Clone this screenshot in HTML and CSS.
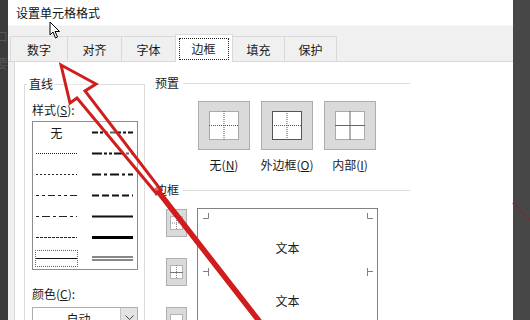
FILE: index.html
```html
<!DOCTYPE html>
<html lang="zh">
<head>
<meta charset="utf-8">
<title>设置单元格格式</title>
<link rel="stylesheet" href="styles.css">
</head>
<body>
<div class="strip-left"><span class="ghost g1">口</span><span class="ghost g2">要</span></div>
<div class="dialog">
  <div class="titlebar">设置单元格格式</div>
  <div class="tabbar">
    <div class="tab t1">数字</div>
    <div class="tab t2">对齐</div>
    <div class="tab t3">字体</div>
    <div class="tab t4 active"><span class="focus">边框</span></div>
    <div class="tab t5">填充</div>
    <div class="tab t6">保护</div>
  </div>
  <div class="body">
    <div class="panel">
      <fieldset class="linegroup">
        <legend>直线</legend>
        <div class="fs-inner">
          <div class="lbl">样式(<u>S</u>):</div>
          <div class="stylebox">
            <div class="cell"><span class="none">无</span></div>
            <div class="cell"><svg width="41" height="5"><line x1="0" y1="2.5" x2="41" y2="2.5" stroke="#111" stroke-width="2" stroke-dasharray="6 2 3 2 3 2"/></svg></div>
            <div class="cell"><svg width="41" height="5"><line x1="0" y1="2.5" x2="41" y2="2.5" stroke="#222" stroke-width="1" stroke-dasharray="1 1"/></svg></div>
            <div class="cell"><svg width="41" height="5"><line x1="0" y1="2.5" x2="41" y2="2.5" stroke="#111" stroke-width="2" stroke-dasharray="10 2 3 2 3 2"/></svg></div>
            <div class="cell"><svg width="41" height="5"><line x1="0" y1="2.5" x2="41" y2="2.5" stroke="#222" stroke-width="1" stroke-dasharray="2 2"/></svg></div>
            <div class="cell"><svg width="41" height="5"><line x1="0" y1="2.5" x2="41" y2="2.5" stroke="#111" stroke-width="2" stroke-dasharray="9 3 3 3"/></svg></div>
            <div class="cell"><svg width="41" height="5"><line x1="0" y1="2.5" x2="41" y2="2.5" stroke="#222" stroke-width="1" stroke-dasharray="3 3 3 3 7 3"/></svg></div>
            <div class="cell"><svg width="41" height="5"><line x1="0" y1="2.5" x2="41" y2="2.5" stroke="#111" stroke-width="2" stroke-dasharray="7 3"/></svg></div>
            <div class="cell"><svg width="41" height="5"><line x1="0" y1="2.5" x2="41" y2="2.5" stroke="#222" stroke-width="1" stroke-dasharray="3 3 8 3"/></svg></div>
            <div class="cell"><svg width="41" height="5"><line x1="0" y1="2.5" x2="41" y2="2.5" stroke="#111" stroke-width="2"/></svg></div>
            <div class="cell"><svg width="41" height="5"><line x1="0" y1="2.5" x2="41" y2="2.5" stroke="#222" stroke-width="1" stroke-dasharray="3 1"/></svg></div>
            <div class="cell"><svg width="41" height="5"><line x1="0" y1="2.5" x2="41" y2="2.5" stroke="#000" stroke-width="3"/></svg></div>
            <div class="cell sel"><svg width="41" height="5"><line x1="0" y1="2.5" x2="41" y2="2.5" stroke="#111" stroke-width="1"/></svg></div>
            <div class="cell"><svg width="41" height="5"><line x1="0" y1="1" x2="41" y2="1" stroke="#111" stroke-width="1"/><line x1="0" y1="4" x2="41" y2="4" stroke="#111" stroke-width="1"/></svg></div>
          </div>
          <div class="lbl lbl2">颜色(<u>C</u>):</div>
          <div class="combo"><span class="combo-text">自动</span><span class="combo-btn"><svg width="9" height="6"><path d="M0.5 0.5 L4.5 4.5 L8.5 0.5" fill="none" stroke="#444" stroke-width="1"/></svg></span></div>
        </div>
      </fieldset>
      <div class="right">
        <div class="sechead">预置</div>
        <div class="presets">
          <div class="preset">
            <div class="pbtn"><svg width="30" height="29"><rect x="0" y="0" width="30" height="29" fill="#fff"/><rect x="0.5" y="0.5" width="29" height="28" fill="none" stroke="#555" stroke-dasharray="1 1"/><line x1="15" y1="0" x2="15" y2="29" stroke="#555" stroke-dasharray="1 1"/><line x1="0" y1="14.5" x2="30" y2="14.5" stroke="#555" stroke-dasharray="1 1"/></svg></div>
            <div class="plabel">无(<u>N</u>)</div>
          </div>
          <div class="preset">
            <div class="pbtn"><svg width="30" height="29"><rect x="0" y="0" width="30" height="29" fill="#fff"/><line x1="15" y1="0" x2="15" y2="29" stroke="#555" stroke-dasharray="1 1"/><line x1="0" y1="14.5" x2="30" y2="14.5" stroke="#555" stroke-dasharray="1 1"/><rect x="0.5" y="0.5" width="29" height="28" fill="none" stroke="#555"/></svg></div>
            <div class="plabel">外边框(<u>O</u>)</div>
          </div>
          <div class="preset">
            <div class="pbtn"><svg width="30" height="29"><rect x="0" y="0" width="30" height="29" fill="#fff"/><rect x="0.5" y="0.5" width="29" height="28" fill="none" stroke="#555" stroke-dasharray="1 1"/><line x1="15" y1="0" x2="15" y2="29" stroke="#666"/><line x1="0" y1="14.5" x2="30" y2="14.5" stroke="#666"/></svg></div>
            <div class="plabel">内部(<u>I</u>)</div>
          </div>
        </div>
        <div class="sechead sec2">边框</div>
        <div class="borderarea">
          <div class="sidebtns">
            <div class="sbtn"><svg width="13" height="14"><rect x="0" y="0" width="13" height="14" fill="#fff"/><rect x="0.5" y="0.5" width="12" height="13" fill="none" stroke="#666" stroke-dasharray="1 1"/><line x1="0" y1="7" x2="13" y2="7" stroke="#888" stroke-dasharray="1 1"/><line x1="6.5" y1="0" x2="6.5" y2="14" stroke="#888" stroke-dasharray="1 1"/></svg></div>
            <div class="sbtn"><svg width="13" height="14"><rect x="0" y="0" width="13" height="14" fill="#fff"/><rect x="0.5" y="0.5" width="12" height="13" fill="none" stroke="#666" stroke-dasharray="1 1"/><line x1="0" y1="7.5" x2="13" y2="7.5" stroke="#777"/><line x1="6.5" y1="0" x2="6.5" y2="14" stroke="#888" stroke-dasharray="1 1"/></svg></div>
            <div class="sbtn"><svg width="13" height="14"><rect x="0" y="0" width="13" height="14" fill="#fff"/><rect x="0.5" y="0.5" width="12" height="13" fill="none" stroke="#666" stroke-dasharray="1 1"/><line x1="0" y1="7" x2="13" y2="7" stroke="#888" stroke-dasharray="1 1"/></svg></div>
          </div>
          <div class="preview">
            <div class="marks marks-top">
              <svg width="6" height="6"><path d="M5.5 0 V5.5 H0" fill="none" stroke="#808080"/></svg>
              <svg width="6" height="6"><path d="M0.5 0 V5.5 H6" fill="none" stroke="#808080"/></svg>
            </div>
            <div class="ptext">文本</div>
            <div class="marks marks-mid">
              <svg width="6" height="8"><path d="M0 3.5 H5.5 M5.5 0 V8" fill="none" stroke="#808080"/></svg>
              <svg width="6" height="8"><path d="M0.5 0 V8 M0.5 3.5 H6" fill="none" stroke="#808080"/></svg>
            </div>
            <div class="ptext ptext2">文本</div>
          </div>
        </div>
      </div>
    </div>
  </div>
</div>
<div class="strip-right"></div>
<svg class="overlay" width="530" height="320" viewBox="0 0 530 320">
  <line x1="157" y1="190" x2="263" y2="326" stroke="#d01c1c" stroke-width="5.5" stroke-linecap="round"/>
  <polygon points="61,65 96,84 85,91 161,190 156,193 77,98 70,103" fill="rgba(255,255,255,0.35)" stroke="#cf1e1e" stroke-width="3" stroke-linejoin="miter"/>
  <line x1="513" y1="203" x2="530" y2="220" stroke="#6a3535" stroke-width="2"/>
  <path d="M50 22 L50 35 L53 32 L55.5 38 L57.5 37 L55 31.5 L59.5 31.5 Z" fill="#fff" stroke="#000" stroke-width="1" stroke-linejoin="round"/>
</svg>
</body>
</html>
```

FILE: styles.css
```css
html, body {
  margin: 0;
  padding: 0;
}
body {
  width: 530px;
  height: 320px;
  overflow: hidden;
  display: flex;
  position: relative;
  font-family: "Noto Sans CJK SC", "Noto Sans", sans-serif;
  font-size: 12px;
  color: #1a1a1a;
  background: #fff;
}
u {
  text-decoration: underline;
  text-underline-offset: 1px;
}

.strip-left {
  width: 8px;
  flex: none;
  background: #3b3b3b;
  overflow: hidden;
  display: flex;
  flex-direction: column;
}
.ghost {
  display: block;
  color: #565656;
  font-size: 13px;
  line-height: 13px;
  margin-left: -5px;
}
.g1 { margin-top: 29px; }
.g2 { margin-top: 14px; }

.strip-right {
  width: 17px;
  flex: none;
  background: #474747;
}

.dialog {
  width: 505px;
  flex: none;
  display: flex;
  flex-direction: column;
  background: #fff;
}

.titlebar {
  height: 25px;
  flex: none;
  padding-left: 8px;
  line-height: 26px;
  font-size: 12px;
  color: #111;
}

.tabbar {
  height: 35px;
  flex: none;
  background: #f0f0f0;
  border-top: 1px solid #f7f7f7;
  border-bottom: 1px solid #d9d9d9;
  display: flex;
  align-items: flex-end;
  padding-left: 2px;
  box-sizing: content-box;
}
.tab {
  box-sizing: border-box;
  height: 25px;
  border: 1px solid #d9d9d9;
  border-bottom: none;
  margin-right: -1px;
  display: flex;
  align-items: center;
  justify-content: center;
  background: #f0f0f0;
  color: #1a1a1a;
}
.t1 { width: 58px; }
.t2 { width: 55px; }
.t3 { width: 55px; }
.t4 { width: 58px; }
.t5 { width: 53px; }
.t6 { width: 53px; }
.tab.active {
  height: 28px;
  margin-bottom: -1px;
  background: #fff;
  position: relative;
  z-index: 1;
}
.focus {
  border: 1px dotted #222;
  padding: 2px 12px 2px 11px;
  line-height: 16px;
}

.body {
  flex: 1;
  display: flex;
  background: #f0f0f0;
  padding-left: 6px;
}
.panel {
  flex: 1;
  background: #fff;
  border-left: 1px solid #d9d9d9;
  display: flex;
  align-items: flex-start;
}

.linegroup {
  margin: 14px 0 0 9px;
  width: 121px;
  height: 260px;
  box-sizing: border-box;
  border: 1px solid #dcdcdc;
  border-bottom: none;
  padding: 0 0 0 2px;
  min-width: 0;
}
.linegroup legend {
  padding: 0 2px;
  line-height: 16px;
  font-size: 12px;
}
.fs-inner {
  padding-left: 5px;
}
.lbl {
  margin-top: 10px;
  line-height: 16px;
}
.lbl2 {
  margin-top: 16px;
}

.stylebox {
  margin-top: 3px;
  width: 106px;
  height: 149px;
  box-sizing: border-box;
  border: 1px solid #8c8c8c;
  display: grid;
  grid-template-columns: 45px 45px;
  column-gap: 11px;
  grid-auto-rows: 21px;
  padding-left: 1px;
}
.cell {
  display: flex;
  align-items: center;
  justify-content: center;
}
.cell svg {
  display: block;
}
.none {
  line-height: 16px;
}
.cell.sel {
  margin: 2px 1px;
  border: 1px dotted #666;
}

.combo {
  margin-top: 5px;
  width: 106px;
  height: 22px;
  box-sizing: border-box;
  border: 1px solid #adadad;
  display: flex;
}
.combo-text {
  flex: 1;
  text-align: center;
  line-height: 22px;
  padding-left: 4px;
}
.combo-btn {
  width: 16px;
  background: #e3e3e3;
  border-left: 1px solid #c4c4c4;
  display: flex;
  align-items: center;
  justify-content: center;
}

.right {
  margin: 13px 0 0 10px;
  width: 255px;
}
.sechead {
  display: flex;
  align-items: center;
  gap: 4px;
  line-height: 16px;
}
.sechead::after {
  content: "";
  flex: 1;
  border-top: 1px solid #dcdcdc;
}
.sec2 {
  margin-top: 9px;
}

.presets {
  display: flex;
  gap: 11px;
  margin: 10px 0 0 43px;
}
.preset {
  width: 52px;
  display: flex;
  flex-direction: column;
  align-items: center;
}
.pbtn {
  width: 52px;
  height: 49px;
  box-sizing: border-box;
  background: #dadada;
  border: 1px solid #adadad;
  display: flex;
  align-items: center;
  justify-content: center;
}
.pbtn svg {
  display: block;
}
.plabel {
  margin-top: 7px;
  line-height: 16px;
  white-space: nowrap;
}

.borderarea {
  display: flex;
  margin-top: 10px;
}
.sidebtns {
  margin: 1px 0 0 11px;
  display: flex;
  flex-direction: column;
  gap: 21px;
}
.sbtn {
  width: 21px;
  height: 28px;
  box-sizing: border-box;
  background: #dadada;
  border: 1px solid #b0b0b0;
  display: flex;
  align-items: center;
  justify-content: center;
}
.sbtn svg {
  display: block;
}

.preview {
  margin-left: 10px;
  width: 181px;
  height: 140px;
  box-sizing: border-box;
  border: 1px solid #828282;
  display: flex;
  flex-direction: column;
}
.marks {
  display: flex;
  justify-content: space-between;
  padding: 0 4px 0 5px;
}
.marks svg {
  display: block;
}
.marks-top {
  margin-top: 4px;
}
.marks-mid {
  margin-top: 12px;
}
.ptext {
  text-align: center;
  line-height: 16px;
  margin-top: 21px;
}
.ptext2 {
  margin-top: 17px;
}

.overlay {
  position: absolute;
  left: 0;
  top: 0;
  pointer-events: none;
}
```
